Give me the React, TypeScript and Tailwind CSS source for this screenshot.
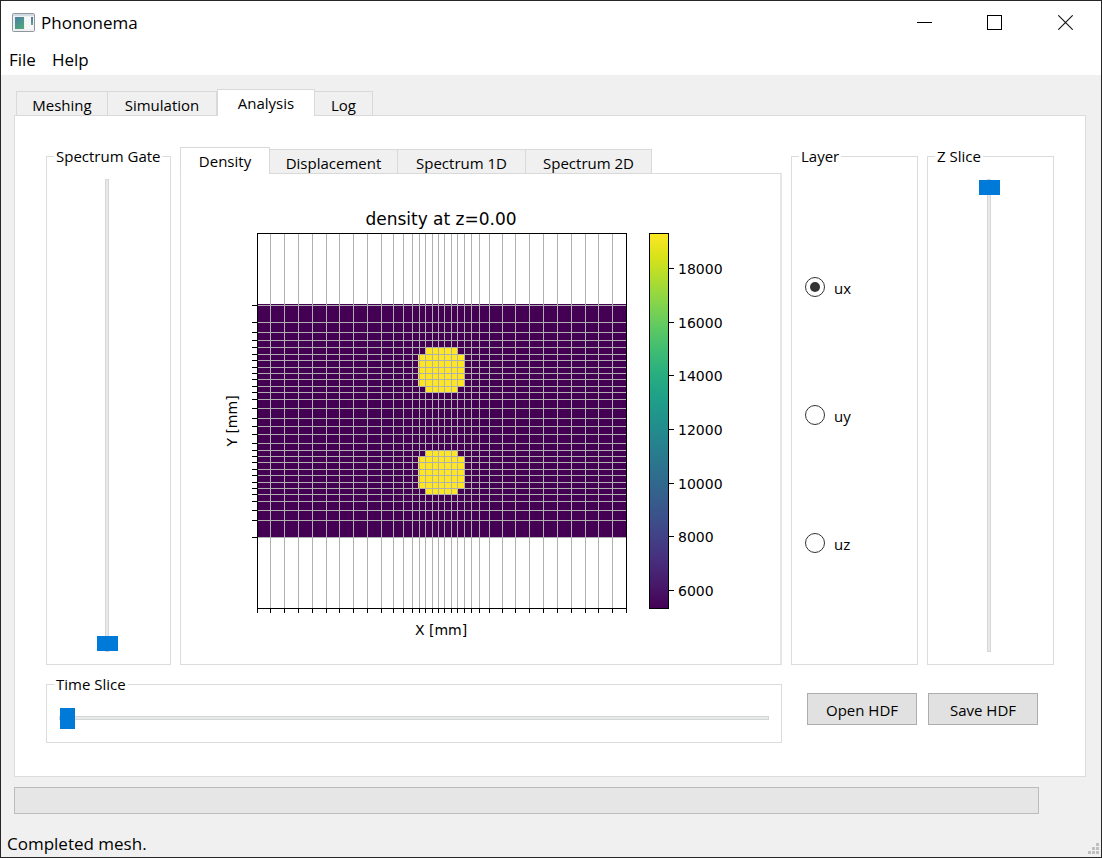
import React, { useState } from "react";

const gridX = [
  257, 270, 284, 298, 312, 326, 339, 353, 367, 381, 393, 403, 412, 419, 425, 432, 438, 444, 451,
  457, 464, 471, 479, 489, 502, 515, 529, 543, 557, 571, 585, 598, 612, 626,
];

const gridY = [
  305, 322, 332, 340, 347, 354, 360, 367, 373, 379, 386, 392, 399, 408, 418, 426, 434, 443, 450,
  456, 462, 469, 475, 482, 488, 494, 501, 510, 520, 537,
];

const colorTicks = [
  { label: "18000", y: 268 },
  { label: "16000", y: 322 },
  { label: "14000", y: 375 },
  { label: "12000", y: 429 },
  { label: "10000", y: 483 },
  { label: "8000", y: 536 },
  { label: "6000", y: 590 },
];

const viridis = [
  "#fde725", "#d8e219", "#addc30", "#84d44b", "#5ec962", "#3fbc73", "#28ae80", "#1fa088",
  "#21918c", "#26828e", "#2c728e", "#33638d", "#3b528b", "#424086", "#472d7b", "#48186a",
  "#440154",
];

function DensityPlot() {
  return (
    <svg
      viewBox="181 174 599 490"
      className="block h-full w-full"
      fontFamily="'DejaVu Sans', sans-serif"
      role="img"
      aria-label="density at z=0.00"
    >
      <defs>
        <linearGradient id="viridis" x1="0" y1="0" x2="0" y2="1">
          {viridis.map((c, i) => (
            <stop key={c} offset={i / (viridis.length - 1)} stopColor={c} />
          ))}
        </linearGradient>
      </defs>

      <text x="441" y="225" textAnchor="middle" fontSize="17">
        density at z=0.00
      </text>

      <g shapeRendering="crispEdges">
        <rect x="257" y="304" width="370" height="234" fill="#440154" />
        <path d="M425 347H458V354H464V387H458V393H425V387H418V354H425Z" fill="#fde725" />
        <path d="M425 450H458V456H464V489H458V495H425V489H418V456H425Z" fill="#fde725" />
        {gridX.map((x) => (
          <rect key={x} x={x} y="233" width="1" height="376" fill="#b0b0b0" />
        ))}
        {gridY.map((y) => (
          <rect key={y} x="257" y={y} width="370" height="1" fill="#b0b0b0" />
        ))}
        {gridX.map((x) => (
          <rect key={x} x={x} y="609" width="1" height="4" fill="#000" />
        ))}
        {gridY.map((y) => (
          <rect key={y} x="252" y={y} width="5" height="1" fill="#000" />
        ))}
        <rect x="257.5" y="233.5" width="369" height="375" fill="none" stroke="#000" />
        <rect x="649.5" y="233.5" width="19" height="375" fill="url(#viridis)" stroke="#000" />
        {colorTicks.map((t) => (
          <rect key={t.label} x="669" y={t.y} width="5" height="1" fill="#000" />
        ))}
      </g>

      {colorTicks.map((t) => (
        <text key={t.label} x="678" y={t.y + 6} fontSize="14">
          {t.label}
        </text>
      ))}
      <text x="441" y="635" textAnchor="middle" fontSize="14">
        X [mm]
      </text>
      <text transform="translate(237 421) rotate(-90)" textAnchor="middle" fontSize="14">
        Y [mm]
      </text>
    </svg>
  );
}

type Tab = { name: string; width: string };

const pages: Tab[] = [
  { name: "Meshing", width: "w-[92px]" },
  { name: "Simulation", width: "w-[109px]" },
  { name: "Analysis", width: "w-[98px]" },
  { name: "Log", width: "w-[58px]" },
];

const plots: Tab[] = [
  { name: "Density", width: "w-[90px]" },
  { name: "Displacement", width: "w-[128px]" },
  { name: "Spectrum 1D", width: "w-[128px]" },
  { name: "Spectrum 2D", width: "w-[126px]" },
];

function TabBar({ tabs, initial, label }: { tabs: Tab[]; initial: string; label: string }) {
  const [active, setActive] = useState(initial);
  return (
    <div role="tablist" aria-label={label} className="relative -mb-px flex items-end">
      {tabs.map((t) => (
        <button
          key={t.name}
          type="button"
          role="tab"
          aria-selected={t.name === active}
          onClick={() => setActive(t.name)}
          className={
            t.name === active
              ? `${t.width} h-[27px] border border-b-0 border-[#d9d9d9] bg-white pb-px leading-6`
              : `${t.width} h-[25px] border border-l-0 border-[#d9d9d9] bg-[#f0f0f0] pt-px leading-6 first:border-l`
          }
        >
          {t.name}
        </button>
      ))}
    </div>
  );
}

function Group({
  title,
  className,
  children,
}: {
  title: string;
  className: string;
  children: React.ReactNode;
}) {
  return (
    <fieldset className="flex min-w-0 flex-col border border-[#dcdcdc]">
      <legend className="ml-[7px] px-[2px] pt-px leading-[21px]">{title}</legend>
      <div className={`flex min-h-0 flex-1 flex-col ${className}`}>{children}</div>
    </fieldset>
  );
}

const verticalSlider =
  "min-h-0 w-[21px] flex-1 appearance-none bg-transparent [direction:rtl] [writing-mode:vertical-lr] [&::-webkit-slider-runnable-track]:w-1 [&::-webkit-slider-runnable-track]:border [&::-webkit-slider-runnable-track]:border-[#d6d6d6] [&::-webkit-slider-runnable-track]:bg-[#e7eaea] [&::-webkit-slider-thumb]:-ml-[9px] [&::-webkit-slider-thumb]:h-[15px] [&::-webkit-slider-thumb]:w-[21px] [&::-webkit-slider-thumb]:appearance-none [&::-webkit-slider-thumb]:bg-[#007ad9]";

const horizontalSlider =
  "h-[21px] w-full appearance-none bg-transparent [&::-webkit-slider-runnable-track]:h-1 [&::-webkit-slider-runnable-track]:border [&::-webkit-slider-runnable-track]:border-[#d6d6d6] [&::-webkit-slider-runnable-track]:bg-[#e7eaea] [&::-webkit-slider-thumb]:-mt-[9px] [&::-webkit-slider-thumb]:h-[21px] [&::-webkit-slider-thumb]:w-[15px] [&::-webkit-slider-thumb]:appearance-none [&::-webkit-slider-thumb]:bg-[#007ad9]";

function TitleBar() {
  return (
    <header className="bg-white text-[17px]">
      <div className="flex h-[43px] items-center">
        <svg width="23" height="19" viewBox="0 0 23 19" className="ml-[11px]" aria-hidden="true">
          <defs>
            <linearGradient id="app" x1="0" y1="0" x2="0.6" y2="1">
              <stop offset="0" stopColor="#4b7fa6" />
              <stop offset="1" stopColor="#4fa57c" />
            </linearGradient>
            <linearGradient id="appRight" x1="0" y1="0" x2="0" y2="1">
              <stop offset="0" stopColor="#4878a8" />
              <stop offset="1" stopColor="#6aa58c" />
            </linearGradient>
          </defs>
          <rect x="0.5" y="0.5" width="22" height="18" rx="1" fill="#eef0f2" stroke="#8f979d" />
          <rect x="1" y="1" width="21" height="2" fill="#d3dbe2" />
          <rect x="3" y="4" width="9" height="12" fill="url(#app)" />
          <rect x="13" y="4" width="8" height="12" fill="#f7f7f7" />
          <rect x="19" y="4" width="2" height="8" fill="url(#appRight)" />
        </svg>
        <h1 className="ml-[6px] flex-1 leading-6">Phononema</h1>
        <button type="button" aria-label="Minimize" className="flex h-full w-[69px] items-center justify-center">
          <svg width="15" height="15" viewBox="0 0 15 15" shapeRendering="crispEdges">
            <path d="M0 7.5H15" stroke="#000" />
          </svg>
        </button>
        <button type="button" aria-label="Maximize" className="flex h-full w-[71px] items-center justify-center">
          <svg width="15" height="15" viewBox="0 0 15 15" shapeRendering="crispEdges">
            <rect x="0.5" y="0.5" width="14" height="14" fill="none" stroke="#000" />
          </svg>
        </button>
        <button type="button" aria-label="Close" className="flex h-full w-[71px] items-center justify-center">
          <svg width="15" height="15" viewBox="0 0 15 15">
            <path d="M0.3 0.3L14.7 14.7M14.7 0.3L0.3 14.7" stroke="#111" strokeWidth="1.1" />
          </svg>
        </button>
      </div>
      <nav className="flex h-[31px] items-center gap-4 pt-px pl-2">
        <button type="button" className="leading-6">File</button>
        <button type="button" className="leading-6">Help</button>
      </nav>
    </header>
  );
}

export default function App() {
  const [layer, setLayer] = useState("ux");
  return (
    <div className="flex min-h-screen flex-col border border-[#262626] bg-[#f0f0f0] font-['Open_Sans',sans-serif] text-[15px] text-black">
      <TitleBar />

      <main className="flex flex-1 flex-col pt-[14px] pr-[15px] pl-[13px]">
        <div className="pl-[2px]">
          <TabBar tabs={pages} initial="Analysis" label="Pages" />
        </div>
        <div className="flex flex-1 flex-col gap-2 border border-[#dcdcdc] bg-white px-[31px] pt-[29px] pb-[33px]">
          <div className="grid flex-1 grid-cols-[125px_1fr_127px_127px] gap-[9px]">
            <Group title="Spectrum Gate" className="items-center py-3 pr-[3px]">
              <input type="range" aria-label="Spectrum Gate" defaultValue={0} className={verticalSlider} />
            </Group>

            <section className="flex min-w-0 flex-col pt-[2px]">
              <TabBar tabs={plots} initial="Density" label="Plots" />
              <div className="min-h-0 flex-1 border border-r-2 border-[#dcdcdc] border-r-[#e6e6e6]">
                <DensityPlot />
              </div>
            </section>

            <Group title="Layer" className="justify-evenly pt-[3px] pb-1 pl-[13px]">
              {["ux", "uy", "uz"].map((name) => (
                <label key={name} className="flex h-[22px] items-center gap-[9px]">
                  <input
                    type="radio"
                    name="layer"
                    value={name}
                    checked={layer === name}
                    onChange={() => setLayer(name)}
                    className="size-5 appearance-none rounded-full border border-[#333] bg-white checked:bg-[#333] checked:bg-clip-content checked:p-1"
                  />
                  <span className="pt-[2px]">{name}</span>
                </label>
              ))}
            </Group>

            <Group title="Z Slice" className="items-center py-3 pr-[3px]">
              <input type="range" aria-label="Z Slice" defaultValue={100} className={verticalSlider} />
            </Group>
          </div>

          <div className="grid grid-cols-[1fr_110px_110px] items-start gap-x-[11px] pr-4">
            <div className="mr-[14px] grid h-[70px]">
              <Group title="Time Slice" className="px-3 pt-3">
                <input type="range" aria-label="Time Slice" defaultValue={0} className={horizontalSlider} />
              </Group>
            </div>
            <button type="button" className="mt-5 h-8 border border-[#adadad] bg-[#e1e1e1] pt-[2px]">
              Open HDF
            </button>
            <button type="button" className="mt-5 h-8 border border-[#adadad] bg-[#e1e1e1] pt-[2px]">
              Save HDF
            </button>
          </div>
        </div>
      </main>

      <footer className="pt-[10px]">
        <div className="pr-[62px] pl-[13px]">
          <progress
            aria-label="Progress"
            value={0}
            max={100}
            className="block h-[27px] w-full appearance-none border border-[#bcbcbc] bg-[#e6e6e6] [&::-webkit-progress-bar]:bg-[#e6e6e6]"
          />
        </div>
        <div className="flex h-[43px] items-end justify-between pr-[2px] pl-[6px] text-[17px]">
          <p role="status" className="pb-px leading-6">Completed mesh.</p>
          <svg width="11" height="14" viewBox="0 0 11 14" fill="#bfbfbf" aria-hidden="true">
            <path d="M8 0h3v3H8zM4 4h3v3H4zM8 4h3v3H8zM0 8h3v3H0zM4 8h3v3H4zM8 8h3v3H8z" />
          </svg>
        </div>
      </footer>
    </div>
  );
}
